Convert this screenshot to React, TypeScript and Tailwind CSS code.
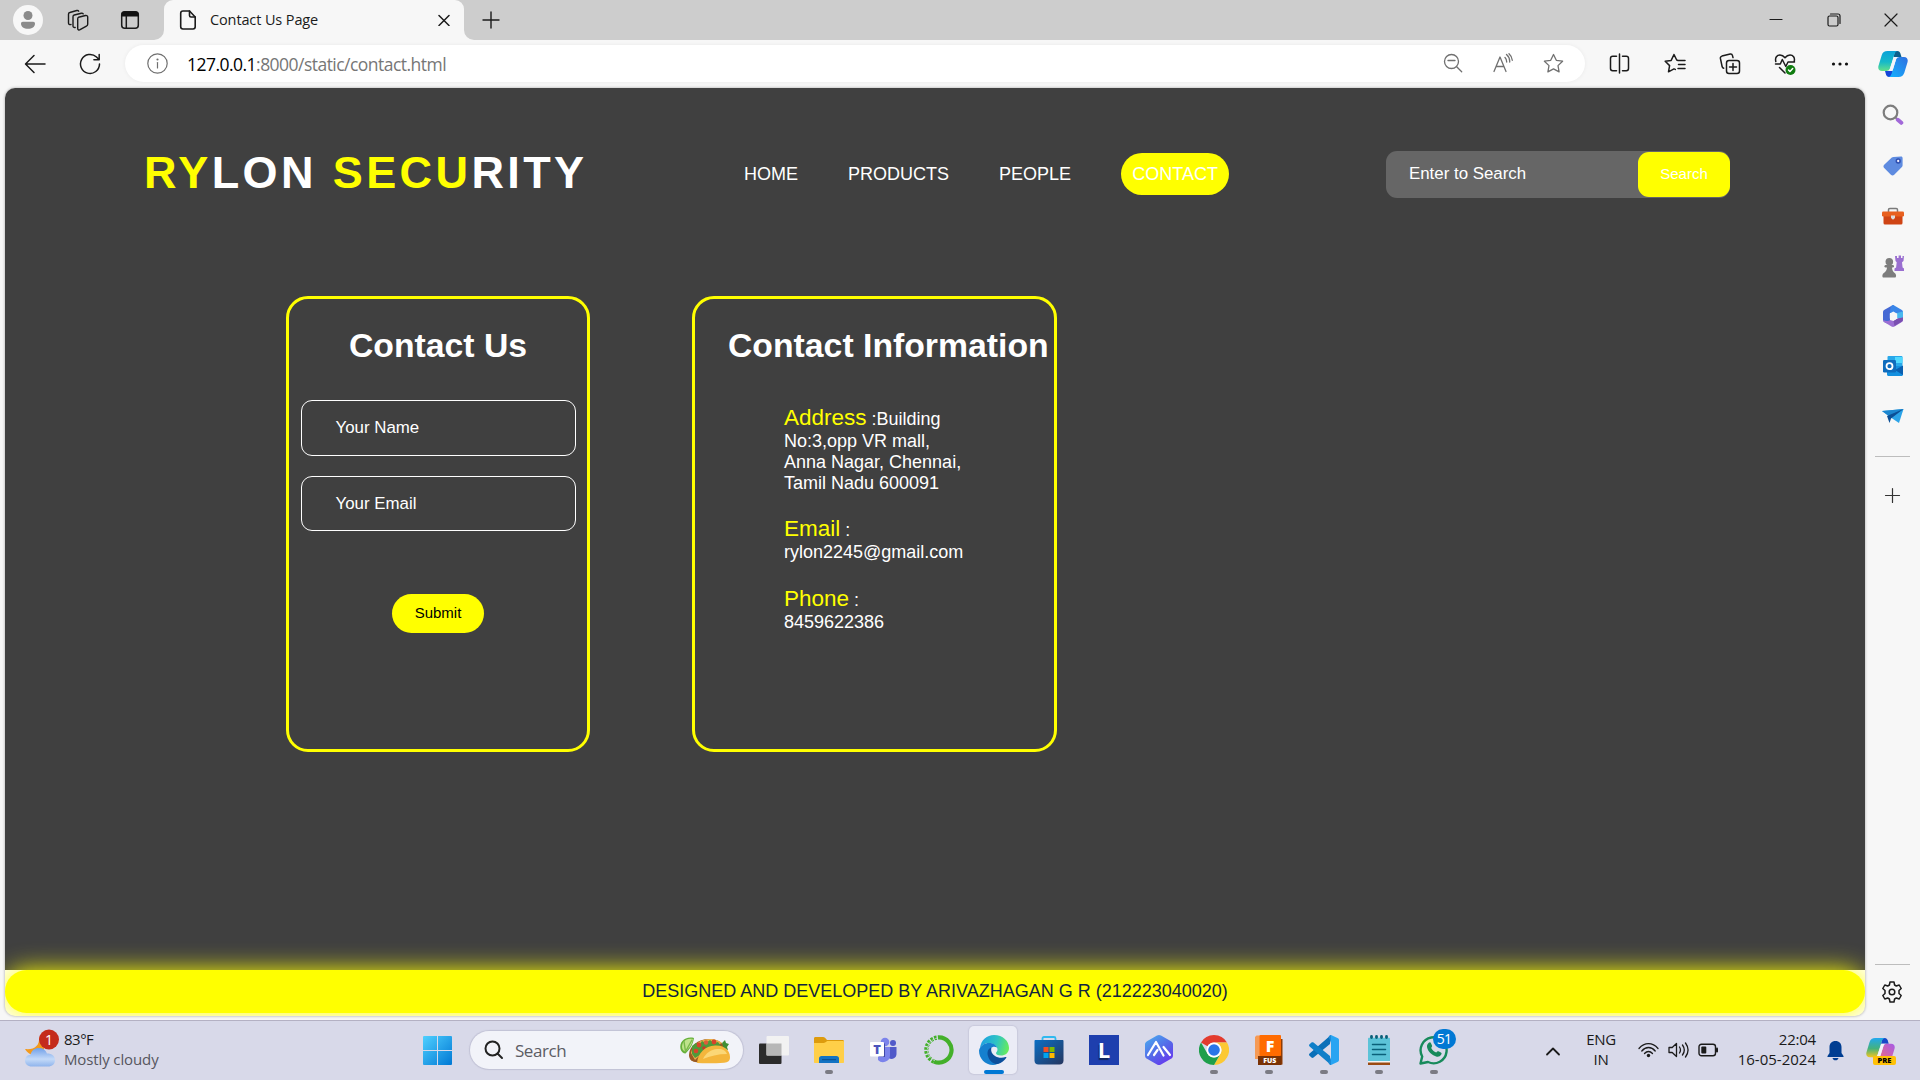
import React from "react";

const ui = "font-['Open_Sans','Noto_Sans',sans-serif]";

type IconProps = {
  w: number;
  h?: number;
  vb?: string;
  c?: string;
  sw?: number;
  children: React.ReactNode;
};

function Icon({ w, h = w, vb, c = "#1b1b1b", sw = 1.4, children }: IconProps) {
  return (
    <svg
      className="block shrink-0"
      width={w}
      height={h}
      viewBox={vb ?? `0 0 ${w} ${h}`}
      fill="none"
      stroke={c}
      strokeWidth={sw}
      strokeLinecap="round"
      strokeLinejoin="round"
    >
      {children}
    </svg>
  );
}

function Copilot({ w, preview = false }: { w: number; preview?: boolean }) {
  const id = preview ? "p" : "c";
  return (
    <Icon w={w} vb="0 0 30 30">
      <defs>
        <linearGradient id={`${id}a`} x1="0" y1="0" x2="0" y2="1">
          <stop offset="0" stopColor={preview ? "#20a8f0" : "#0aa2d8"} />
          <stop offset=".55" stopColor={preview ? "#45b27c" : "#16b9c9"} />
          <stop offset="1" stopColor={preview ? "#f2c61f" : "#63e08a"} />
        </linearGradient>
        <linearGradient id={`${id}b`} x1="1" y1="0" x2="0" y2="1">
          <stop offset="0" stopColor={preview ? "#a55be8" : "#2f6fe0"} />
          <stop offset="1" stopColor={preview ? "#ff6f6b" : "#13b4ff"} />
        </linearGradient>
      </defs>
      <g stroke="none">
        <path d="M17 2h2.500c1.600 0 2.400 1 2.900 2.500L23.500 8h-8z" fill={preview ? "#1748c8" : "#0b5f8c"} />
        <path d="M13 28h-2c-1.600 0-2.500-1-3-2.500L7 22h8z" fill={preview ? "#f7a928" : "#1546d8"} />
        <path d="M9.500 2H20c-2 0-3 1.400-3.600 3.300L12 19.500c-.6 1.700-1.500 2.500-3.200 2.500H4c-3 0-4.300-2.300-3.500-5.200l3.200-10.600C4.600 3.400 6.500 2 9.500 2z" fill={`url(#${id}a)`} />
        <path d="M20.500 28H10c2 0 3-1.400 3.600-3.300L18 10.500C18.600 8.800 19.500 8 21.200 8H26c3 0 4.300 2.300 3.500 5.200l-3.200 10.600C25.400 26.600 23.500 28 20.500 28z" fill={`url(#${id}b)`} />
        <path d="M15.800 8h5.400c-1.700 0-2.600.8-3.200 2.500l-2.900 9.500c-.4 1.200-1.200 1.900-2.400 2H8.800c1.700 0 2.600-.8 3.200-2.500z" fill="#f3f4fa" />
      </g>
    </Icon>
  );
}

function TabBar() {
  return (
    <div className="flex h-[40px] shrink-0 bg-[#cdcdcd]">
      <div className="flex w-[56px] items-center justify-center">
        <div className="flex size-[30px] items-center justify-center rounded-full bg-[#f7f7f7]">
          <Icon w={16} h={18}>
            <g stroke="none" fill="#8b8b8b">
              <circle cx="8" cy="4.500" r="4.500" />
              <path d="M1 12.500c0-1 .8-1.800 1.800-1.800h10.400c1 0 1.800.8 1.800 1.800 0 3.500-3 5.300-7 5.300s-7-1.800-7-5.300z" />
            </g>
          </Icon>
        </div>
      </div>
      <div className="flex w-[43px] items-center justify-center">
        <Icon w={22} sw={1.400}>
          <path d="M11.500 8.300l7-1.800c1.200-.3 2.200.4 2.200 1.600v7.200c0 .8-.5 1.500-1.300 1.800l-6.300 3.600c-1.200.6-2.400 0-2.400-1.300V9.900c0-.8.200-1.300.8-1.600z" />
          <path d="M8.200 18.500c-1.400.3-2.200-.4-2.200-1.500V7.700c0-.9.500-1.500 1.300-1.700l7-1.800c.8-.2 1.500 0 1.900.6" />
          <path d="M4 15.500c-1.400.3-2.500-.3-2.500-1.500V5.200c0-.9.500-1.500 1.300-1.700l7-2c.9-.2 1.600 0 1.900.7" />
        </Icon>
      </div>
      <div className="flex w-[61px] items-center justify-center">
        <Icon w={20} sw={1.500}>
          <rect x="1.700" y="1.700" width="16.600" height="16.600" rx="3" />
          <path d="M1.500 6.500V4c0-1.500 1-2.500 2.500-2.500h12c1.500 0 2.500 1 2.500 2.500v2.500z" fill="#111" stroke="none" />
          <path d="M6.300 6.500v11.500" />
        </Icon>
      </div>
      <svg className="ml-[-6px] shrink-0 self-end" width="10" height="10">
        <path d="M10 0a10 10 0 0 1-10 10h10z" fill="#f7f7f7" />
      </svg>
      <div className="flex h-full w-[300px] items-center rounded-t-[9px] bg-[#f7f7f7] pl-[15px] pr-[14px]">
        <Icon w={18} h={20} sw={1.600}>
          <path d="M10.500 1H4C2.600 1 1.700 1.900 1.700 3.200v13.600C1.700 18.100 2.600 19 4 19h10c1.400 0 2.200-.9 2.200-2.200V7z" />
          <path d="M10.500 1v4.500c0 .9.500 1.500 1.500 1.500h4.200" />
        </Icon>
        <span className={`${ui} ml-[13px] flex-1 whitespace-nowrap text-[14.500px] leading-[20px] tracking-[-0.120px] text-[#1b1b1b]`}>
          Contact Us Page
        </span>
        <Icon w={12} sw={1.500}>
          <path d="M1 1.500l10 10M11 1.500l-10 10" />
        </Icon>
      </div>
      <svg className="shrink-0 self-end" width="10" height="10">
        <path d="M0 0a10 10 0 0 0 10 10H0z" fill="#f7f7f7" />
      </svg>
      <div className="ml-[8px] flex items-center">
        <Icon w={18} sw={1.400}>
          <path d="M9 1v16M1 9h16" />
        </Icon>
      </div>
      <div className="ml-auto flex w-[174px] items-center">
        <div className="flex w-[60px] shrink-0 items-center justify-center">
          <Icon w={14} sw={1.200}>
            <path d="M1 6.500h12" />
          </Icon>
        </div>
        <div className="flex w-[55px] shrink-0 items-center justify-center">
          <Icon w={14} sw={1.200}>
            <rect x="1" y="3" width="10" height="10" rx="1.500" />
            <path d="M3.500 1h7.500c1.300 0 2 .8 2 2v7.500" />
          </Icon>
        </div>
        <div className="flex w-[60px] shrink-0 items-center justify-center">
          <Icon w={14} sw={1.200}>
            <path d="M1 1l12 12M13 1L1 13" />
          </Icon>
        </div>
      </div>
    </div>
  );
}

function Cell({ children }: { children: React.ReactNode }) {
  return <div className="flex w-[55px] shrink-0 items-center justify-center">{children}</div>;
}

function Toolbar() {
  return (
    <div className="flex h-[48px] shrink-0 items-center pb-px">
      <div className="flex w-[70px] justify-center">
        <Icon w={22} sw={1.500}>
          <path d="M21 11H2M10 2.500L1.500 11l8.500 8.500" />
        </Icon>
      </div>
      <div className="flex w-[40px] justify-center">
        <Icon w={22} sw={1.500}>
          <path d="M20.500 11a9.500 9.500 0 1 1-3-7l2.500 2.500M20.200 1.500v5.300h-5.300" />
        </Icon>
      </div>
      <div className="ml-[15px] flex h-[37px] w-[1460px] items-center rounded-full bg-white pr-[7px] shadow-[0_0_4px_rgba(0,0,0,0.06)]">
        <div className="w-[62px] pl-[22px]">
          <Icon w={21} c="#6f6f6f" sw={1.200}>
            <circle cx="10.500" cy="10.500" r="9.700" />
            <path d="M10.500 9.500v5.500" />
            <circle cx="10.500" cy="6.500" r=".5" fill="#6f6f6f" />
          </Icon>
        </div>
        <span className={`${ui} whitespace-nowrap text-[17.500px] leading-[24px] tracking-[-0.530px] text-[#767676]`}>
          <span className="text-black">127.0.0.1</span>:8000/static/contact.html
        </span>
        <div className="ml-auto flex">
          <div className="flex w-[50px] justify-center">
            <Icon w={20} c="#707070" sw={1.300}>
              <circle cx="8.500" cy="8.500" r="7" />
              <path d="M5 7.500h7M13.700 13.700l5 5" />
            </Icon>
          </div>
          <div className="flex w-[50px] justify-center">
            <Icon w={20} c="#707070" sw={1.300}>
              <path d="M1 18.500L7 4l6 14.500M3 13.500h8M12 4.500c1.200 1.200 1.700 2.500 1.700 4.500M13.500 1.500c2.300 2 3.400 4.500 3.200 7.500M16 .8c2 1.800 3.200 4 3.300 6.500" />
            </Icon>
          </div>
          <div className="flex w-[50px] justify-center">
            <Icon w={21} c="#707070" sw={1.300}>
              <path d="M10.500 1.500l2.800 5.800 6.300.9-4.600 4.400 1.100 6.300-5.600-3-5.600 3L6 12.600 1.400 8.200l6.300-.9z" />
            </Icon>
          </div>
        </div>
      </div>
      <div className="ml-[7px] flex w-[273px] items-center">
        <Cell>
          <Icon w={21} sw={1.500}>
            <path d="M7.500 3.200H3.700C2.300 3.200 1.500 4 1.500 5.400v10.200c0 1.400.8 2.200 2.200 2.200h3.800M13.500 3.200h3.800c1.400 0 2.200.8 2.200 2.200v10.200c0 1.400-.8 2.200-2.200 2.200h-3.800M10.500 1v19" />
          </Icon>
        </Cell>
        <Cell>
          <Icon w={22} sw={1.500}>
            <path d="M14 7.500L12.700 7 10 1.500 7.200 7.400l-6 .9 4.400 4.300-1.100 6.200 5.500-2.900M14 7.500h7M14.500 11.500H21M14 15.500h7M10 15.900l1.300.5" />
          </Icon>
        </Cell>
        <Cell>
          <Icon w={22} sw={1.500}>
            <rect x="7.500" y="7.500" width="13" height="13" rx="2.500" />
            <path d="M14 10.500v7M10.500 14h7M4.700 15.200c-.9-.2-1.400-.8-1.600-1.700L1.400 5.400c-.2-1.200.4-2 1.500-2.300l8.300-2c1.200-.2 2 .3 2.300 1.500l.5 2" />
          </Icon>
        </Cell>
        <Cell>
          <Icon w={22} h={24} sw={1.500}>
            <path d="M1.800 9.500C.8 5.500 3 3 6 3c2 0 3.600 1 5 2.800C12.400 4 14 3 16 3c3 0 5.200 2.500 4.200 6.500M1.500 12h4.800l2-4.500 3.500 7 2.200-4.500h6.500M5.500 15.500l5.500 5.500" />
            <circle cx="16.500" cy="18" r="5" fill="#107c10" stroke="none" />
            <path d="M14.500 18l1.500 1.500 2.700-3" stroke="#fff" />
          </Icon>
        </Cell>
        <Cell>
          <Icon w={18} h={4}>
            <g fill="#111" stroke="none">
              <circle cx="2.500" cy="2" r="1.600" />
              <circle cx="9" cy="2" r="1.600" />
              <circle cx="15.500" cy="2" r="1.600" />
            </g>
          </Icon>
        </Cell>
      </div>
    </div>
  );
}

function InfoLabel({ label, children }: { label: string; children?: React.ReactNode }) {
  return (
    <div className="h-[26px] text-[22.500px] leading-[26px]">
      <span className="text-[#ffff00]">{label}</span>
      <span className="text-[18px] leading-none"> :{children}</span>
    </div>
  );
}

function Page() {
  return (
    <div className="ml-[5px] flex h-[928px] w-[1860px] flex-col overflow-hidden rounded-[10px] bg-white font-['Liberation_Sans',Arial,sans-serif] text-white shadow-[0_0_3px_rgba(0,0,0,0.35)]">
      <div className="h-[882px] shrink-0 bg-[#404040]">
        <header className="flex h-[131px] items-center pl-[139px] pt-[41px]">
          <div className="w-[600px] whitespace-nowrap pb-[2px] text-[45px] font-bold leading-[52px] tracking-[3.400px]">
            <span className="text-[#ffff00]">RY</span>LON <span className="text-[#ffff00]">SECU</span>RITY
          </div>
          <nav className="flex w-[642px] items-center gap-[50px] text-[18px] leading-[42px]">
            <a>HOME</a>
            <a>PRODUCTS</a>
            <a>PEOPLE</a>
            <a className="h-[42px] w-[108px] rounded-[21px] bg-[#ffff00] text-center">CONTACT</a>
          </nav>
          <div className="flex h-[47px] w-[344px] items-center rounded-[11px] bg-[#666666]">
            <span className="w-[252px] pl-[23px] text-[16.875px]">Enter to Search</span>
            <button className="h-[45px] w-[92px] rounded-[11px] bg-[#ffff00] text-[15px]">Search</button>
          </div>
        </header>
        <main className="mt-[77px] flex gap-[102px] pl-[281px]">
          <section className="flex h-[456px] w-[304px] flex-col items-center rounded-[22px] border-[3px] border-[#ffff00] pt-[26px]">
            <h2 className="text-[33.750px] font-bold leading-[40px]">Contact Us</h2>
            <div className="mt-[35px] flex h-[56px] w-[275px] items-center rounded-[11px] border border-white pl-[34px] text-[16.875px]">
              Your Name
            </div>
            <div className="mt-[20px] flex h-[55px] w-[275px] items-center rounded-[11px] border border-white pl-[34px] text-[16.875px]">
              Your Email
            </div>
            <button className="mt-[63px] h-[39px] w-[92px] rounded-[20px] bg-[#ffff00] text-[15px] text-black">Submit</button>
          </section>
          <section className="h-[456px] w-[365px] rounded-[22px] border-[3px] border-[#ffff00] pt-[26px]">
            <h2 className="whitespace-nowrap pl-[33px] text-[33.750px] font-bold leading-[40px]">Contact Information</h2>
            <div className="ml-[89px] mt-[40px] flex flex-col whitespace-nowrap text-[18px] leading-[21px]">
              <InfoLabel label="Address">Building</InfoLabel>
              <div>No:3,opp VR mall,</div>
              <div>Anna Nagar, Chennai,</div>
              <div>Tamil Nadu 600091</div>
              <div className="mt-[22px]">
                <InfoLabel label="Email" />
                <div>rylon2245@gmail.com</div>
              </div>
              <div className="mt-[23px]">
                <InfoLabel label="Phone" />
                <div>8459622386</div>
              </div>
            </div>
          </section>
        </main>
      </div>
      <footer className="h-[43px] shrink-0 rounded-[22px] bg-[#ffff00] text-center text-[18px] leading-[42px] text-[#10253f] shadow-[0_0_24px_#ffff00]">
        DESIGNED AND DEVELOPED BY ARIVAZHAGAN G R (212223040020)
      </footer>
    </div>
  );
}

function Sidebar() {
  return (
    <aside className="flex w-[55px] shrink-0 flex-col items-center">
      <div className="flex h-[49px] items-center pb-[2px]">
        <Copilot w={30} />
      </div>
      <div className="flex h-[52px] items-center">
        <Icon w={22}>
          <path d="M14 14l2 2" stroke="#777" strokeWidth="1.800" />
          <circle cx="8.500" cy="8.500" r="6.800" stroke="#7d7d7d" strokeWidth="2.200" />
          <path d="M15.800 15.800l3.500 3" stroke="#a269d9" strokeWidth="4" />
        </Icon>
      </div>
      <div className="flex h-[50px] items-center">
        <Icon w={20}>
          <path d="M10.500 1L18 .5c1 0 1.600.6 1.600 1.500v7.300c0 .7-.2 1.200-.7 1.700l-7.700 7.800c-1 1-2.300 1-3.300 0L1.200 12c-1-1-1-2.300 0-3.300L8.800 1.600c.5-.4 1-.6 1.700-.6z" fill="#5e8be0" stroke="none" />
          <circle cx="15.200" cy="5" r="1.900" fill="#eef" stroke="#2f4fb0" strokeWidth="1.500" />
        </Icon>
      </div>
      <div className="flex h-[50px] items-center">
        <Icon w={22} h={18}>
          <path d="M6.500 5V2.800c0-.8.500-1.300 1.300-1.300h6.400c.8 0 1.300.5 1.300 1.300V5" stroke="#7a7a7a" strokeWidth="1.500" />
          <g stroke="none">
            <rect x="1.500" y="5" width="19" height="12.500" rx="1.500" fill="#cf4414" />
            <rect x="0" y="4.500" width="22" height="5" rx="1.300" fill="#e8601f" />
            <path d="M9 8.500h4V11l-2 1.700-2-1.700z" fill="#ddd" />
          </g>
        </Icon>
      </div>
      <div className="flex h-[50px] items-center">
        <Icon w={22} h={23}>
          <g stroke="none">
            <path d="M13 1h2v2h1.600V.5h2.400V3h1.500V1H22l-.5 5-1.500 1.200.6 5.300 1.400 1V16h-9.500v-2.500l1.600-1 .6-5.300L13.500 6z" fill="#9a6fd0" />
            <g fill="#7d7d7d">
              <circle cx="7.300" cy="6.700" r="3.800" />
              <rect x="2.500" y="10" width="9.500" height="2.500" rx="1.200" />
              <path d="M5 12h5c0 3 .8 4.600 3 6.200 1.500 1.200 1.400 4.300 0 4.300H1.500c-1.500 0-1.500-3 0-4.300C4 16.600 5 15 5 12z" />
            </g>
          </g>
        </Icon>
      </div>
      <div className="flex h-[50px] items-center">
        <Icon w={20} h={22}>
          <g stroke="none">
            <path d="M9.500.2L1.500 4.800C.5 5.400 0 6.200 0 7.300v7.500c0 1 .5 1.900 1.500 2.500l3.500 1.500 2-1.500V8l4-2.500z" fill="#4569d4" />
            <path d="M9 .4c.8-.4 1.500-.4 2.200 0l7.300 4.400c1 .6 1.500 1.400 1.500 2.500V14c-1-2-2-3-4-4l-2.500-1.500L7 8c0-3 .3-6.400 2-7.600z" fill="#3a86e8" />
            <path d="M14 8l6-1.500V12l-2 3-4-2z" fill="#49b8ee" />
            <path d="M20 12.500v2.300c0 1-.5 1.900-1.500 2.500l-7 4.200c-1 .6-2 .6-3 0l-7-4.200C.8 16.900.2 16 0 15l3 1c2 .4 3-.3 4-1l3.500 1 4-2.300z" fill="#9c6fd3" />
            <path d="M10.500 16l4-2.500 5.500-1-.3 3.500-8.200 5z" fill="#7a4fb0" />
            <path d="M6.800 8.600L10.300 6.600l3.900 2.200v4.600L10.500 15.600 6.800 13.500z" fill="#f7f7f7" />
          </g>
        </Icon>
      </div>
      <div className="flex h-[50px] items-center">
        <Icon w={20}>
          <g stroke="none">
            <rect x="4.500" y="0" width="15" height="14" rx="1" fill="#28a8ea" />
            <path d="M12 1h7.500v6H12z" fill="#50d9ff" />
            <path d="M4 10h16v8.500c0 .8-.6 1.500-1.500 1.500h-13c-.9 0-1.500-.7-1.500-1.500z" fill="#1490df" />
            <path d="M20 9.500v9.500l-8-5z" fill="#0a5fb0" />
            <rect x="0" y="4" width="13" height="12.500" rx="1.300" fill="#0f6cbd" />
          </g>
          <circle cx="6.500" cy="10.200" r="3" stroke="#fff" strokeWidth="1.800" />
        </Icon>
      </div>
      <div className="flex h-[50px] items-center">
        <Icon w={22} h={17}>
          <g stroke="none">
            <path d="M0 3L21.500 1 17 15l-6-4z" fill="#2ba3e8" />
            <path d="M0 3l21.500-2L8 9z" fill="#1c86cf" />
            <path d="M5 8l16.500-7L9 10.500 7.500 15z" fill="#0b4f96" />
          </g>
        </Icon>
      </div>
      <div className="mt-[15px] h-px w-[35px] bg-[#bdbdbd]" />
      <div className="mt-[30px] mr-px">
        <Icon w={17} sw={1.200} c="#333">
          <path d="M8.500 1.500v14M1.500 8.500h14" />
        </Icon>
      </div>
      <div className="mt-auto h-px w-[35px] bg-[#bdbdbd]" />
      <div className="mb-[17px] mt-[16px] mr-px">
        <Icon w={22} sw={1.500}>
          <path d="M9 1h4l.6 3 1.700 1 2.900-1 2 3.500L18 9.500v3l2.200 2-2 3.500-2.900-1-1.700 1-.6 3H9l-.6-3-1.700-1-2.900 1-2-3.500 2.200-2v-3l-2.200-2L3.800 4l2.900 1 1.700-1z" />
          <circle cx="11" cy="11" r="2.800" />
        </Icon>
      </div>
    </aside>
  );
}

function Task({ children, run = false, active = false }: { children: React.ReactNode; run?: boolean; active?: boolean }) {
  return (
    <div className="relative flex h-[59px] w-[55px] shrink-0 items-center justify-center">
      {active && <div className="absolute left-[3px] top-[5px] h-[48px] w-[48px] rounded-[5px] bg-[#ebecf6] shadow-[0_0_1px_1px_rgba(160,160,185,0.25)]" />}
      <div className="relative mb-[1px]">{children}</div>
      {run && <div className="absolute left-[24px] top-[49px] h-[4px] w-[8px] rounded-full bg-[#7b7b84]" />}
      {active && <div className="absolute left-[18px] top-[49px] h-[4px] w-[20px] rounded-full bg-[#0078d4]" />}
    </div>
  );
}

function Taco() {
  return (
    <Icon w={52} h={28}>
      <g stroke="none">
        <path d="M15 2C6 0 0 6 1.500 13c.5 2.500 3 4.500 5 4.500C12 12 14 8 15 2z" fill="#66b03a" />
        <path d="M14 3C7 1.500 2 6.500 3.200 12.300c.4 1.800 2 3.200 3.300 3.200C11.500 11 13 8 14 3z" fill="#bfe38b" />
        <path d="M6.500 15.500L5 5.500M6.500 15.500L13 4" stroke="#78b84a" />
        <path d="M10 19c0-9 9-16 20-16 8 0 15 4 16 9L20 26c-6 1-10-2-10-7z" fill="#9a5a22" />
        <path d="M12 17C14 8 22 3 31 3c5 0 10 2 12 4L24 16l-8 8z" fill="#e8b04a" />
        <path d="M13 10l4-3 3 2 3-4 4 2 4-3 4 3 4-1 3 4-9 3-9 4-8 5-3-4z" fill="#4f9a3a" />
        <circle cx="20" cy="9" r="2.400" fill="#d8432b" />
        <circle cx="27" cy="6.500" r="2.200" fill="#e05a3a" />
        <circle cx="35" cy="6" r="2.400" fill="#d8432b" />
        <circle cx="17" cy="15" r="2.300" fill="#d8432b" />
        <circle cx="25" cy="12" r="1.800" fill="#c9392a" />
        <path d="M43 7l3-3 1 3 3 1-2 3 1 3-4-1z" fill="#3f8f34" />
        <path d="M18 27c1-10 8-17 18-17.500C45 9 51 14 51 21c0 4-2 5.500-6 5.700C36 27.500 26 27.500 18 27z" fill="#f4b63c" />
        <path d="M24 23c3-6 8-9.500 14-10 5-.4 9 1.500 10 5-9 0-17 2-24 5z" fill="#fbd777" />
      </g>
    </Icon>
  );
}

function Taskbar() {
  return (
    <div className={`${ui} flex h-[60px] shrink-0 border-t border-[#b4b1c3] bg-[#d8d9e9] text-[15px] text-[#1a1a1a]`}>
      <div className="flex w-[423px] items-center pl-[24px]">
        <div className="pb-[4px]">
          <Icon w={36} h={42}>
            <defs>
              <linearGradient id="cloud" x1="0" y1="0" x2="0" y2="1">
                <stop offset="0" stopColor="#6f9fe8" />
                <stop offset=".6" stopColor="#c4daf8" />
                <stop offset="1" stopColor="#8fb4ec" />
              </linearGradient>
            </defs>
            <g stroke="none">
              <path d="M15 9c1 9-5 13-14 12 3 6 11 8 16 4s5-12-2-16z" fill="#f39a1d" />
              <path d="M8 38.500c-4.500 0-7-2.500-7-6 0-3.200 2.300-5.500 5.500-5.800C7.500 22.500 10.500 20 15 20c4 0 6.800 2 8 5.500 5 0 8 2.700 8 6.700 0 3.800-2.800 6.300-7 6.300z" fill="url(#cloud)" />
              <circle cx="25" cy="11.500" r="10" fill="#c42b1c" />
            </g>
            <text x="25" y="16.500" textAnchor="middle" fill="#fff" stroke="none" fontSize="14" fontFamily="Open Sans">
              1
            </text>
          </Icon>
        </div>
        <div className="ml-[4px] whitespace-nowrap pb-[4px] leading-[20px]">
          <div className="tracking-[-0.500px]">83°F</div>
          <div className="tracking-[-0.120px] text-[#56565e]">Mostly cloudy</div>
        </div>
      </div>
      <div className="flex w-[47px] items-center">
        <Icon w={29}>
          <defs>
            <linearGradient id="win" x1="0" y1="0" x2="1" y2="1" gradientUnits="objectBoundingBox">
              <stop offset="0" stopColor="#4fd0ff" />
              <stop offset="1" stopColor="#0078d4" />
            </linearGradient>
          </defs>
          <path stroke="none" fill="url(#win)" d="M1 0h13v14H0V1a1 1 0 0 1 1-1zM15 0h13a1 1 0 0 1 1 1v13H15zM0 15h14v14H1a1 1 0 0 1-1-1zM15 15h14v13a1 1 0 0 1-1 1H15z" />
        </Icon>
      </div>
      <div className="mt-[10px] flex h-[38px] w-[273px] items-center rounded-full bg-[#f2f3f9] pl-[14px] pr-[12px] shadow-[0_0_1px_1px_rgba(160,160,185,0.4)]">
        <Icon w={20} c="#222" sw={2}>
          <circle cx="8.500" cy="8.500" r="7" />
          <path d="M13.500 13.500l4.500 4.500" />
        </Icon>
        <span className="ml-[11px] flex-1 pt-px text-[17px] tracking-[-0.450px] text-[#5c5c64]">Search</span>
        <Taco />
      </div>
      <div className="ml-[3px] flex">
        <Task>
          <Icon w={30} h={28}>
            <g stroke="none">
              <rect x="0" y="7.500" width="22.500" height="20.500" rx="1" fill="#2b2b2b" />
              <rect x="7.500" y="0" width="22.500" height="19.500" rx="1" fill="#f2f2f2" />
              <path d="M7.500 7.500h15v12h-15z" fill="#b7b7b7" />
            </g>
          </Icon>
        </Task>
        <Task run>
          <Icon w={30} h={28}>
            <g stroke="none">
              <path d="M0 2.500C0 1.500.6 1 1.500 1H9c.8 0 1.300.2 2 .8L13 4h15.500c1 0 1.500.5 1.500 1.500V12H0z" fill="#dd9b0d" />
              <path d="M0 7h9.500c.8 0 1.300-.3 2-.8l1-.7c.5-.4 1-.5 1.700-.5H29c.6 0 1 .4 1 1v20c0 .6-.4 1-1 1H1c-.6 0-1-.4-1-1z" fill="#ffcf48" />
              <path d="M5 27v-4.500C5 21 6 20 7.500 20h15c1.500 0 2.500 1 2.500 2.500V27z" fill="#1373c4" />
              <path d="M8 23.200h14v1H8z" fill="#0a4a8a" />
            </g>
          </Icon>
        </Task>
        <Task>
          <Icon w={27} h={26}>
            <g stroke="none">
              <circle cx="15" cy="5" r="4.300" fill="#7b83eb" />
              <circle cx="23" cy="6" r="3" fill="#5059c9" />
              <path d="M19 10h7.500v7a5 5 0 0 1-7.500 4.300z" fill="#5059c9" />
              <path d="M8 10h12v8a7 7 0 0 1-12 5z" fill="#7b83eb" />
              <path d="M8 6h5.500c.9 0 1.500.6 1.500 1.500V20H9z" fill="#4048a8" />
              <rect x="0" y="5" width="14" height="14.500" rx="1" fill="#fff" />
            </g>
            <text x="7" y="17" textAnchor="middle" fill="#4b53bc" stroke="none" fontSize="13" fontWeight="800" fontFamily="Open Sans">
              T
            </text>
          </Icon>
        </Task>
        <Task>
          <Icon w={30}>
            <path d="M15 2.400a12.600 12.600 0 1 1-5 24.200" stroke="#43b02a" strokeWidth="4.200" strokeLinecap="butt" />
            <path d="M10 26.600A12.600 12.600 0 0 1 15 2.400" stroke="#43b02a" strokeWidth="4.200" strokeDasharray="2.500 1.200" strokeLinecap="butt" />
            <path d="M10.500 25.500A11.800 11.800 0 0 1 14 3" stroke="#d8d9e9" strokeWidth="1" strokeDasharray="1.500 2" strokeLinecap="butt" />
          </Icon>
        </Task>
        <Task active>
          <Icon w={30}>
            <defs>
              <linearGradient id="edgeTop" x1="0" y1=".3" x2="1" y2=".5">
                <stop offset="0" stopColor="#1c9fe3" />
                <stop offset=".55" stopColor="#2fc4c4" />
                <stop offset="1" stopColor="#66eb5e" />
              </linearGradient>
            </defs>
            <g stroke="none">
              <path d="M1 13C2 5 8 0 15 0c9 0 15 6 15 13 0 5-4 7.500-8 7.500-3.500 0-5-1.300-5-2.500 0-.8 1.500-1.300 1.500-3.500C18.500 11 14 8 10 8c-4 0-7 2-9 5z" fill="url(#edgeTop)" />
              <path d="M0 15.500C1 10.500 6 8 10 8c4 0 7 2 8 4.500-4-2-7.500.5-7.500 4.500C10.500 23 16 27 22 26c-2 2.500-5 4-8 4C6 30 0 23.500 0 15.500z" fill="#1580cf" />
              <path d="M12.500 12.500C9 13.500 8 17 8.800 20.500 10 26 15 29.500 19 29c3.500-1 6.500-3.500 8.300-6.300.4-.6-.2-1-.8-.7-5.500 2.300-13.500-.5-14.300-6.500-.1-1 0-2 .3-3z" fill="#0c4f9c" />
            </g>
          </Icon>
        </Task>
        <Task>
          <Icon w={30}>
            <defs>
              <linearGradient id="store" x1="0" y1="0" x2="1" y2="1">
                <stop offset="0" stopColor="#0b6fc4" />
                <stop offset="1" stopColor="#26365f" />
              </linearGradient>
            </defs>
            <path d="M8.500 6V3.500c0-1 .6-1.500 1.500-1.500h10c.9 0 1.500.5 1.500 1.500V6" stroke="#30b9ef" strokeWidth="1.800" />
            <g stroke="none">
              <path d="M.5 6c0-.5.400-1 1-1h27c.6 0 1 .5 1 1v19.500c0 2.500-1.500 4-4 4h-21c-2.500 0-4-1.500-4-4z" fill="url(#store)" />
              <path d="M9.500 12h5v5h-5z" fill="#f25022" />
              <path d="M15.500 12h5v5h-5z" fill="#7fba00" />
              <path d="M9.500 18h5v5h-5z" fill="#00a4ef" />
              <path d="M15.500 18h5v5h-5z" fill="#ffb900" />
            </g>
          </Icon>
        </Task>
        <Task>
          <div className="flex size-[30px] items-center justify-center bg-[#1e3fae] pb-[2px] pl-px text-[22px] font-bold leading-none text-white [text-shadow:-1px_2px_1px_#12265e]">
            L
          </div>
        </Task>
        <Task>
          <Icon w={30}>
            <defs>
              <linearGradient id="hex" x1=".2" y1="0" x2=".9" y2="1">
                <stop offset="0" stopColor="#4aa6ee" />
                <stop offset=".5" stopColor="#5568e8" />
                <stop offset="1" stopColor="#6a2ff0" />
              </linearGradient>
            </defs>
            <path stroke="none" d="M13 .6c1.300-.8 2.700-.8 4 0l10 5.600c1.300.8 2 1.800 2 3.300v11c0 1.500-.7 2.500-2 3.300l-10 5.600c-1.300.8-2.700.8-4 0L3 23.800c-1.300-.8-2-1.800-2-3.300v-11c0-1.500.7-2.500 2-3.300z" fill="url(#hex)" />
            <path d="M4 20L12 7l7.500 13.500M10 20l3.500-5M19.500 12l6.500 8" stroke="#fff" strokeWidth="2.200" />
          </Icon>
        </Task>
        <Task run>
          <Icon w={30} vb="0 0 48 48">
            <g stroke="none">
              <path d="M24 0a24 24 0 0 1 20.800 12H24a12 12 0 0 0-10.400 6L3.200 12A24 24 0 0 1 24 0z" fill="#e33b2e" />
              <path d="M44.800 12A24 24 0 0 1 24 48l10.400-18A12 12 0 0 0 34.400 18 12 12 0 0 0 24 12z" fill="#fcc934" />
              <path d="M3.200 12A24 24 0 0 0 24 48l10.400-18a12 12 0 0 1-20.800 0z" fill="#1e9f4b" />
              <circle cx="24" cy="24" r="12" fill="#fff" />
              <circle cx="24" cy="24" r="9.300" fill="#2a75e8" />
            </g>
          </Icon>
        </Task>
        <Task run>
          <Icon w={28} h={30}>
            <g stroke="none">
              <path d="M24 4h3.500v25.500H5L4 27z" fill="#8f3d05" />
              <path d="M1.500.5H5V24H0V2z" fill="#f59a55" />
              <rect x="4.500" y="0" width="21.500" height="21" rx="1" fill="#ff6b00" />
              <path d="M3 21h23.500v9H3z" fill="#7a3205" />
            </g>
            <text x="15" y="16.500" textAnchor="middle" fill="#fff" stroke="none" fontSize="16" fontWeight="800" fontFamily="Open Sans">
              F
            </text>
            <text x="14.800" y="27.500" textAnchor="middle" fill="#fff" stroke="none" fontSize="7" fontWeight="800" fontFamily="Open Sans">
              FUS
            </text>
          </Icon>
        </Task>
        <Task run>
          <Icon w={30}>
            <g stroke="none">
              <path d="M22 0l-1 9L4.500 22.500c-.7.500-1.400.5-2 0L.6 20.800c-.8-.7-.8-1.500 0-2.200z" fill="#0a6fb8" />
              <path d="M22 30l-1-9L4.500 7.500c-.7-.5-1.400-.5-2 0L.6 9.200c-.8.700-.8 1.500 0 2.200z" fill="#0f7fc9" />
              <path d="M22 0l7 3.300c.7.300 1 .9 1 1.600v20.200c0 .7-.3 1.300-1 1.600L22 30z" fill="#27a4f2" />
              <path d="M22 0v30c-.6 0-1-.2-1.500-.6L19.500 28 22 22.500v-15L19.500 2l1-1.400c.5-.4.9-.6 1.500-.6z" fill="#1b8ad6" />
            </g>
          </Icon>
        </Task>
        <Task run>
          <Icon w={22} h={30}>
            <g stroke="none">
              <path d="M0 27h22v3H0z" fill="#9a4a12" />
              <path d="M0 25h22v2.500H0z" fill="#f4f4f4" />
              <path d="M0 4c0-.8.400-1.200 1.200-1.200h19.600c.8 0 1.200.4 1.200 1.200v22H0z" fill="#5cc3d8" />
            </g>
            <path d="M4.500 9.500h13M4.500 14.500h13M4.500 19.500h13" stroke="#0a6079" strokeWidth="1.500" />
            <path d="M3.500 1.500v1M8.500 1.500v1M13.500 1.500v1M18.500 1.500v1" stroke="#0a6079" strokeWidth="2.800" />
          </Icon>
        </Task>
        <Task run>
          <Icon w={30}>
            <path d="M1.500 28.500l1.700-7A13 13 0 1 1 9 27z" stroke="#178a5b" strokeWidth="2.400" />
            <path d="M9.500 8c1.200-1 2-.8 2.500.3l1 2.300c.3.700 0 1.300-.8 2.300 1.200 2.300 2.700 3.700 5 4.700 1-1.200 1.600-1.600 2.300-1.300l2.400 1.200c.9.500.9 1.200.2 2.300-1 1.700-3 2.400-5 1.700-4.500-1.500-8-5-9-9-.4-1.700.2-3.500 1.400-4.500z" fill="#178a5b" stroke="none" />
          </Icon>
          <div className="absolute -right-[7px] -top-[6px] flex h-[20px] w-[23px] items-center justify-center rounded-full bg-[#0078d4] text-[14px] leading-none tracking-[-0.700px] text-white">
            51
          </div>
        </Task>
      </div>
      <div className="ml-auto flex items-center pr-[25px]">
        <Icon w={16} h={10} sw={1.800}>
          <path d="M2 8.500l6-6 6 6" />
        </Icon>
        <div className="ml-[20px] w-[40px] whitespace-nowrap pb-[2px] text-center leading-[19.500px] tracking-[-0.300px]">
          <div>ENG</div>
          <div>IN</div>
        </div>
        <div className="ml-[17px] pb-[2px]">
          <Icon w={21} h={16} sw={1.300}>
            <path d="M1 6.500c5.500-6.500 13.500-6.500 19 0M3.800 9c4-4.700 9.500-4.700 13.400 0M6.500 11.500c2.500-2.700 5.500-2.700 8 0" />
            <circle cx="10.500" cy="13.500" r="1.700" fill="#1b1b1b" stroke="none" />
          </Icon>
        </div>
        <div className="ml-[9px] pb-[2px]">
          <Icon w={21} h={18} sw={1.300}>
            <path d="M1 6.500h3.200L8.500 2.500v13l-4.300-4H1z" />
            <path d="M11.500 6c1.300 2 1.300 4 0 6M14.500 4c2.300 3.200 2.300 6.800 0 10M17.500 2c3.300 4.500 3.300 9.500 0 14" />
          </Icon>
        </div>
        <div className="ml-[9px] pb-[2px]">
          <Icon w={21} h={14} sw={1.400}>
            <rect x="1" y="1.300" width="16.500" height="11.400" rx="2.500" />
            <rect x="3.300" y="3.500" width="5" height="7" rx="1" fill="#1b1b1b" stroke="none" />
            <path d="M19 5.500v3" strokeWidth="2" />
          </Icon>
        </div>
        <div className="w-[97px] whitespace-nowrap pb-[4px] text-right leading-[20px]">
          <div className="tracking-[-0.200px]">22:04</div>
          <div>16-05-2024</div>
        </div>
        <div className="ml-[11px]">
          <Icon w={17} h={20}>
            <g stroke="none" fill="#003e92">
              <path d="M8.500 0c3.700 0 6 2.600 6 6v6l2 3c.3.600 0 1-.6 1H1.100c-.6 0-.9-.4-.6-1l2-3V6c0-3.400 2.300-6 6-6z" />
              <path d="M5.500 17h6c-.4 1.500-1.500 2.300-3 2.300s-2.600-.8-3-2.300z" />
            </g>
          </Icon>
        </div>
        <div className="relative ml-[22px]">
          <Copilot w={29} preview />
          <div className="absolute -right-[1px] bottom-0 flex h-[9px] w-[23px] items-center justify-center rounded-[2px] bg-[#ffc107] text-[7.500px] font-extrabold leading-none text-black">
            PRE
          </div>
        </div>
      </div>
    </div>
  );
}

export default function App() {
  return (
    <div className="flex h-[1080px] w-[1920px] flex-col overflow-hidden bg-[#f7f7f7]">
      <TabBar />
      <div className="flex h-[980px] shrink-0">
        <div className="flex w-[1865px] shrink-0 flex-col">
          <Toolbar />
          <Page />
        </div>
        <Sidebar />
      </div>
      <Taskbar />
    </div>
  );
}
